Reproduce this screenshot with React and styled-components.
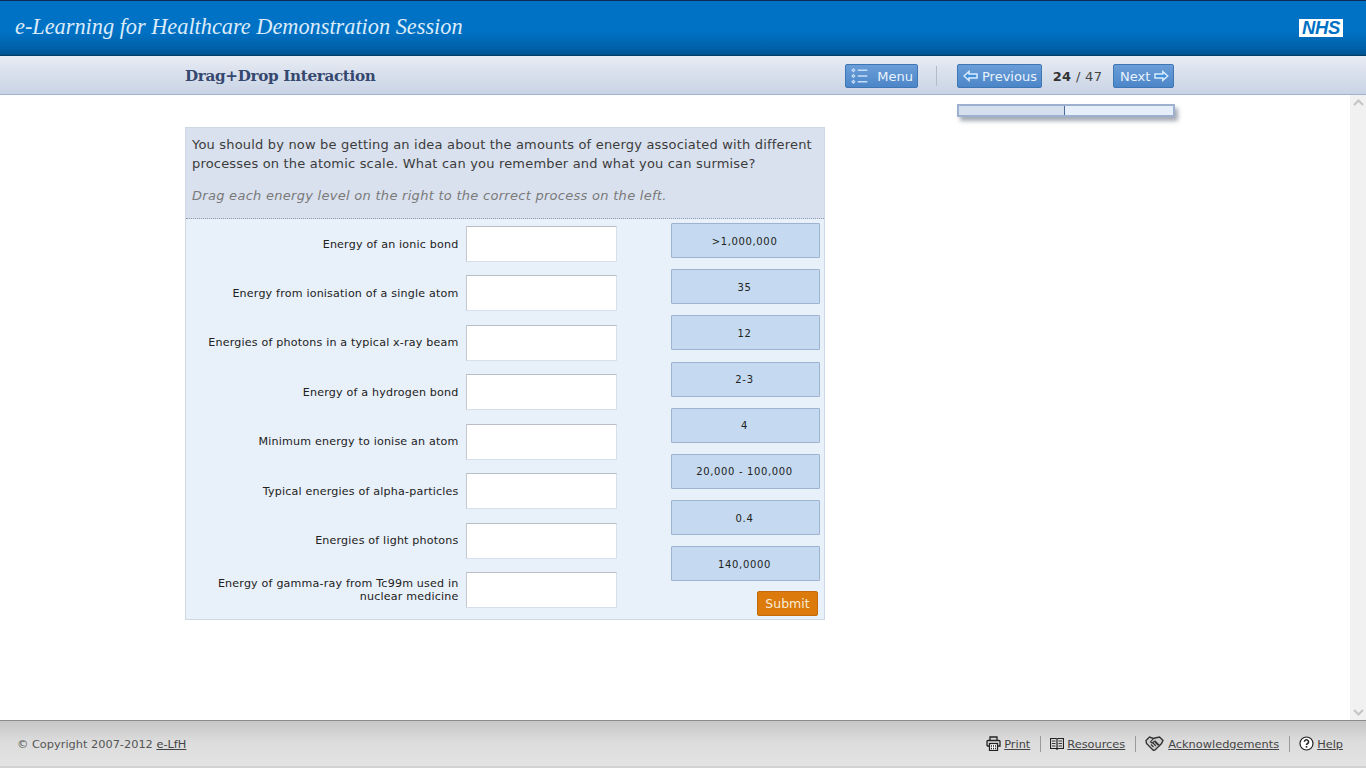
import React from "react";
import styled, { createGlobalStyle } from "styled-components";

const Global = createGlobalStyle`
  html, body { margin: 0; padding: 0; height: 100%; overflow: hidden; background: #fff; }
  #root { height: 768px; }
  * { box-sizing: border-box; }
`;
const Page = styled.div`
  display: flex; flex-direction: column; width: 1366px; height: 768px;
  font-family: "DejaVu Sans", Verdana, sans-serif; background: #fff;
`;
const Header = styled.header`
  flex: 0 0 56px; display: flex; align-items: center; justify-content: space-between;
  padding: 0 23px 1px 15px; color: #e6f0fa;
  border-top: 1px solid #0b2a55; border-bottom: 1px solid #063a66;
  background: linear-gradient(#0072c6 0, #0072c6 55%, #0060a8 88%, #00528f 100%);
`;
const SiteTitle = styled.h1`
  margin: -2px 0 0; font: italic 400 22.3px "Liberation Serif", Georgia, serif; color: #dcebf8;
`;
const NhsLogo = styled.div`
  width: 44px; height: 18px; background: #fff; color: #0072c6; text-align: center;
  font: italic 700 18.5px/18px "Liberation Sans", Arial, sans-serif; letter-spacing: -0.3px;
`;
const SubBar = styled.div`
  flex: 0 0 39px; display: flex; align-items: center; padding: 2px 0 0 185px;
  background: linear-gradient(#e8ecf4, #c8d3e4); border-bottom: 1px solid #a0b2cf;
`;
const SectionTitle = styled.h2`
  margin: 0; width: 660px; font: 700 15.2px "DejaVu Serif", Georgia, serif; letter-spacing: -0.33px; color: #35486f;
`;
const NavButton = styled.button`
  display: inline-flex; align-items: center; gap: ${p => p.$gap || 4}px; height: 24px;
  padding: 0 4px 0 ${p => p.$pl || 5}px;
  width: ${p => p.$w}px; border: 1px solid #3f76b4; border-radius: 2px;
  background: linear-gradient(#6a9dd8, #4c86c8); color: #eaf3fc;
  font: 13px "DejaVu Sans", Verdana, sans-serif; letter-spacing: 0;
`;
const NavDivider = styled.span`
  width: 1px; height: 20px; margin: 0 20px 0 18px; background: #b4bcc8;
`;
const PageCount = styled.span`
  width: 71px; text-align: center; font-size: 13px; letter-spacing: .35px; color: #444;
  b { color: #333; }
`;
const Middle = styled.div`
  flex: 1; display: flex; min-height: 0;
`;
const Content = styled.main`
  flex: 1; display: flex; align-items: flex-start; padding: 9px 0 0 185px;
`;
const Card = styled.section`
  width: 640px; margin-top: 23px; border: 1px solid #cfd9e6; background: #e8f0f9;
`;
const Intro = styled.div`
  height: 91px; padding: 7px 6px 0; background: #d9e1ee; border-bottom: 1px dotted #8f9aa8;
  font-size: 13px; line-height: 19px; color: #3c3c3c;
  p { margin: 0; white-space: nowrap; letter-spacing: 0.185px; }
  em { display: block; margin-top: 13px; color: #7a7a7a; white-space: nowrap; letter-spacing: 0.28px; }
`;
const Body = styled.div`
  display: flex; height: 400px; padding: 4px 4px 0 0;
`;
const Rows = styled.div`
  width: 432px; padding-top: 3px; display: flex; flex-direction: column; gap: 13.45px;
`;
const Row = styled.div`
  display: flex; align-items: center; justify-content: flex-end; gap: 7px; height: 36px;
`;
const RowLabel = styled.label`
  width: 270px; text-align: right; font-size: 11.1px; line-height: 13px; letter-spacing: 0.19px; color: #222;
`;
const DropBox = styled.div`
  flex: 0 0 151px; height: 36px; background: #fff;
  border: 1px solid #d6dfeb; border-top-color: #b9bec6; border-left-color: #c4c9d0;
`;
const Bank = styled.div`
  margin-left: 54px; width: 150px; display: flex; flex-direction: column; gap: 11.2px;
`;
const Chip = styled.div`
  width: 149px; height: 35px; padding: 1px 1px 0 0; display: flex; align-items: center; justify-content: center;
  background: #c5daf0; border: 1px solid #9db3cf; border-radius: 1px;
  font-size: 10px; letter-spacing: 0.65px; color: #222;
`;
const Submit = styled.button`
  align-self: flex-end; width: 61px; height: 25px; margin: -2px 2px 0 0; padding: 0;
  background: #dc7a0c; border: 1px solid #c56a08; border-radius: 2px;
  color: #f8ecd8; font: 12.5px "DejaVu Sans", Verdana, sans-serif;
`;
const Progress = styled.div`
  flex: none; width: 218px; height: 13px; margin-left: 132px; display: flex;
  border: 2px solid #9db0d0; box-shadow: 3px 4px 4px rgba(90,100,120,.55); background: #e6eefa;
`;
const ProgressFill = styled.div`
  height: 100%; background: #d5dfee; border-right: 1px solid #4a6a9a;
`;
const ScrollTrack = styled.div`
  flex: 0 0 16px; display: flex; flex-direction: column; justify-content: space-between; align-items: center;
  background: #f1f1f1; padding: 4px 0;
`;
const Footer = styled.footer`
  flex: 0 0 48px; display: flex; align-items: center; justify-content: space-between;
  padding: 0 23px 0 17px; font-size: 11.35px; color: #555;
  border-top: 1px solid #8c8c8c; border-bottom: 2px solid #d2d2d2;
  background: linear-gradient(#c6c6c6 0, #dcdcdc 45%, #e3e3e3 100%);
`;
const FooterLink = styled.a`
  color: #444; text-decoration: underline;
`;
const Tools = styled.nav`
  display: flex; align-items: center;
`;
const Tool = styled.span`
  display: flex; align-items: center; gap: 3px;
  &:not(:last-child) { padding-right: 10px; margin-right: 9px; border-right: 1px solid #9a9a9a; height: 16px; }
`;

const ArrowLeft = () => (
  <svg width="15" height="12" viewBox="0 0 15 12"><path d="M1 6 6 1.500V4h8v4H6v2.500z" fill="#3f8fdc" stroke="#dcebfb" strokeWidth="1.500"/></svg>
);
const ArrowRight = () => (
  <svg width="15" height="12" viewBox="0 0 15 12"><path d="M14 6 9 1.500V4H1v4h8v2.500z" fill="#3f8fdc" stroke="#dcebfb" strokeWidth="1.500"/></svg>
);
const MenuIcon = () => (
  <svg width="18" height="18" viewBox="0 0 18 18" fill="none" stroke="#c6dff8" strokeWidth="1.700">
    <path d="M7 3h10M7 9h10M7 15h10"/>
    <path d="M2.500 1.500 4 3 2.500 4.500 1 3zM2.500 7.500 4 9l-1.500 1.500L1 9zM2.500 13.500 4 15l-1.500 1.500L1 15z" strokeWidth="1.100"/>
  </svg>
);
const PrintIcon = () => (
  <svg width="15" height="15" viewBox="0 0 15 15" fill="none" stroke="#222" strokeWidth="1.300">
    <path d="M4 4V1h7v3M1 10V5.500A1 1 0 0 1 2 4.500h11a1 1 0 0 1 1 1V10h-2.500M1 10h2.500"/>
    <rect x="3.500" y="7.500" width="8" height="7" fill="#fff"/>
    <path d="M5 10h1M7 10h1M9 10h1M5 12.500h1M7 12.500h1M9 12.500h1"/>
  </svg>
);
const BookIcon = () => (
  <svg width="14" height="13" viewBox="0 0 14 13" fill="none" stroke="#222" strokeWidth="1.200">
    <path d="M.5 1.500h5.500l1 .7 1-.7h5.500v10H8l-1 .7-1-.7H.5zM7 2.200v9.500"/>
    <path d="M2 4h3.500M2 6.500h3.500M2 9h3.500M8.500 4H12M8.500 6.500H12M8.500 9H12" strokeWidth=".9"/>
  </svg>
);
const HandshakeIcon = () => (
  <svg width="20" height="15" viewBox="0 0 20 15" fill="none" stroke="#333" strokeWidth="1.400">
    <path d="M1 4.500 4.500 1l4 1.500L10 2l4.500-1L18 4.500l-1.500 3-6.500 6.500-1.500.5L1.500 7.500z" fill="#cfcfcf"/>
    <path d="M8.500 2.500 5.500 6l1.500 1 3-2 5 5M6 8.500l2.500 2.500M8 7l3 3M10 6l3 3" strokeWidth="1.100"/>
  </svg>
);
const HelpIcon = () => (
  <svg width="15" height="15" viewBox="0 0 15 15">
    <circle cx="7.500" cy="7.500" r="6.500" fill="#fff" stroke="#222" strokeWidth="1.200"/>
    <path d="M5.400 5.800a2.100 2 0 1 1 3.200 1.700c-.8.500-1.100.8-1.100 1.600" fill="none" stroke="#222" strokeWidth="1.500"/>
    <rect x="6.700" y="10" width="1.600" height="1.600" fill="#222"/>
  </svg>
);
const Chevron = ({ down }) => (
  <svg width="11" height="7" viewBox="0 0 11 7"><path d={down ? "M1 1l4.500 4.500L10 1" : "M1 6l4.500-4.500L10 6"} fill="none" stroke="#c4c4c4" strokeWidth="2"/></svg>
);

const rows = [
  "Energy of an ionic bond",
  "Energy from ionisation of a single atom",
  "Energies of photons in a typical x-ray beam",
  "Energy of a hydrogen bond",
  "Minimum energy to ionise an atom",
  "Typical energies of alpha-particles",
  "Energies of light photons",
  "Energy of gamma-ray from Tc99m used in nuclear medicine",
];
const chips = [">1,000,000", "35", "12", "2-3", "4", "20,000 - 100,000", "0.4", "140,0000"];

export default function App() {
  return (
    <Page>
      <Global />
      <Header>
        <SiteTitle>e-Learning for Healthcare Demonstration Session</SiteTitle>
        <NhsLogo>NHS</NhsLogo>
      </Header>
      <SubBar>
        <SectionTitle>Drag+Drop Interaction</SectionTitle>
        <NavButton $w={73} $gap={9}><MenuIcon />Menu</NavButton>
        <NavDivider />
        <NavButton $w={85}><ArrowLeft />Previous</NavButton>
        <PageCount><b>24</b> / 47</PageCount>
        <NavButton $w={61} $pl={6}>Next<ArrowRight /></NavButton>
      </SubBar>
      <Middle>
        <Content>
          <Card>
            <Intro>
              <p>You should by now be getting an idea about the amounts of energy associated with different<br />processes on the atomic scale. What can you remember and what you can surmise?</p>
              <em>Drag each energy level on the right to the correct process on the left.</em>
            </Intro>
            <Body>
              <Rows>
                {rows.map(r => (
                  <Row key={r}>
                    <RowLabel>{r}</RowLabel>
                    <DropBox />
                  </Row>
                ))}
              </Rows>
              <Bank>
                {chips.map(c => <Chip key={c}>{c}</Chip>)}
                <Submit>Submit</Submit>
              </Bank>
            </Body>
          </Card>
          <Progress><ProgressFill style={{ width: `${(23.3 / 47) * 100}%` }} /></Progress>
        </Content>
        <ScrollTrack><Chevron /><Chevron down /></ScrollTrack>
      </Middle>
      <Footer>
        <span>© Copyright 2007-2012 <FooterLink>e-LfH</FooterLink></span>
        <Tools>
          <Tool><PrintIcon /><FooterLink>Print</FooterLink></Tool>
          <Tool><BookIcon /><FooterLink>Resources</FooterLink></Tool>
          <Tool><HandshakeIcon /><FooterLink>Acknowledgements</FooterLink></Tool>
          <Tool><HelpIcon /><FooterLink>Help</FooterLink></Tool>
        </Tools>
      </Footer>
    </Page>
  );
}
